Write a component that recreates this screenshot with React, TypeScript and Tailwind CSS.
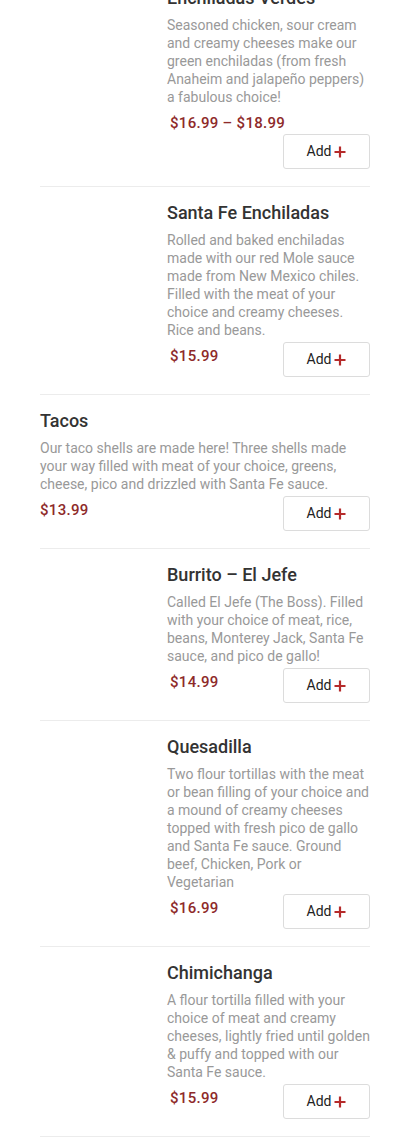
import React from "react";

type Item = {
  name: string;
  desc: string;
  price: string;
  image?: boolean;
};

const items: Item[] = [
  {
    name: "Enchiladas Verdes",
    desc: "Seasoned chicken, sour cream and creamy cheeses make our green enchiladas (from fresh Anaheim and jalapeño peppers) a fabulous choice!",
    price: "$16.99 – $18.99",
    image: true,
  },
  {
    name: "Santa Fe Enchiladas",
    desc: "Rolled and baked enchiladas made with our red Mole sauce made from New Mexico chiles. Filled with the meat of your choice and creamy cheeses. Rice and beans.",
    price: "$15.99",
    image: true,
  },
  {
    name: "Tacos",
    desc: "Our taco shells are made here! Three shells made your way filled with meat of your choice, greens, cheese, pico and drizzled with Santa Fe sauce.",
    price: "$13.99",
  },
  {
    name: "Burrito – El Jefe",
    desc: "Called El Jefe (The Boss). Filled with your choice of meat, rice, beans, Monterey Jack, Santa Fe sauce, and pico de gallo!",
    price: "$14.99",
    image: true,
  },
  {
    name: "Quesadilla",
    desc: "Two flour tortillas with the meat or bean filling of your choice and a mound of creamy cheeses topped with fresh pico de gallo and Santa Fe sauce. Ground beef, Chicken, Pork or Vegetarian",
    price: "$16.99",
    image: true,
  },
  {
    name: "Chimichanga",
    desc: "A flour tortilla filled with your choice of meat and creamy cheeses, lightly fried until golden & puffy and topped with our Santa Fe sauce.",
    price: "$15.99",
    image: true,
  },
];

function PlusIcon() {
  return (
    <svg width="12" height="12" viewBox="0 0 12 12" className="ml-[3px]">
      <path d="M6 0.5v11M0.5 6h11" stroke="#b52a2a" strokeWidth="2.2" />
    </svg>
  );
}

function MenuItem({ item }: { item: Item }) {
  return (
    <div className="flex gap-3 border-b border-[#ececec] pt-[15px] pb-[17px]">
      {item.image && <div className="w-[115px] shrink-0" />}
      <div className="flex-1 min-w-0">
        <h3 className="text-[18px] leading-[22px] font-medium text-[#333]">
          {item.name}
        </h3>
        <p className="mt-[7px] text-[14px] leading-[18px] text-[#999]">
          {item.desc}
        </p>
        <div className="mt-[3px] flex flex-wrap items-start justify-between">
          <span
            className={`pt-[3px] text-[15px] leading-[22px] font-medium tracking-[0.3px] text-[#8e2a2a] ${
              item.image ? "pl-[3px]" : ""
            }`}
          >
            {item.price}
          </span>
          <button className="ml-auto flex h-[35px] w-[87px] items-center justify-center rounded-[3px] border border-[#dcdcdc] bg-white text-[14px] text-[#222]">
            Add
            <PlusIcon />
          </button>
        </div>
      </div>
    </div>
  );
}

export default function App() {
  return (
    <div
      className="min-h-screen bg-white px-10 overflow-hidden"
      style={{ fontFamily: "Roboto, 'Liberation Sans', sans-serif" }}
    >
      <div className="mt-[-28px]">
        {items.map((item) => (
          <MenuItem key={item.name} item={item} />
        ))}
      </div>
    </div>
  );
}
